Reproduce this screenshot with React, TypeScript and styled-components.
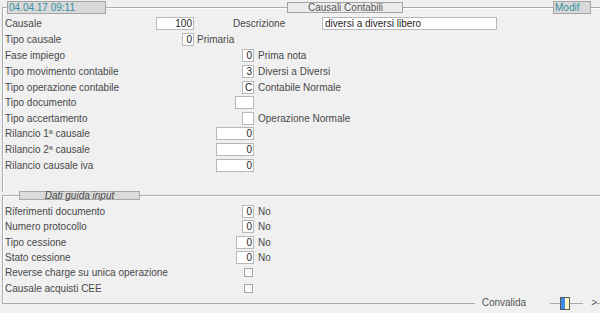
import styled, { createGlobalStyle } from 'styled-components';

const LINE = '#ababab';
const TEAL = '#34909e';
const TEXT = '#494949';

const GlobalStyle = createGlobalStyle`
    * { box-sizing: border-box; }
    body {
        margin: 0;
        background: #f0f0f0;
        font-family: "Liberation Sans", Arial, sans-serif;
        font-size: 10px;
        color: ${TEXT};
    }
`;

const Page = styled.div`
    width: 600px;
    height: 313px;
    overflow: hidden;
    padding-top: 7px;
    background: #f0f0f0;
`;

const Frame = styled.div<{ $h: number; $mt?: number; $bottom?: boolean }>`
    margin-left: 2px;
    margin-top: ${(p) => p.$mt || 0}px;
    height: ${(p) => p.$h}px;
    border-top: 1px solid ${LINE};
    border-left: 1px solid ${LINE};
    border-bottom: ${(p) => (p.$bottom ? `1px solid ${LINE}` : 'none')};
    box-shadow: inset 1px 1px 0 #fff;
    padding-left: 2px;
`;

const Header = styled.div`
    display: flex;
    align-items: center;
    height: 13px;
    margin-top: -7px;
    margin-left: -2px;
`;

const TagBox = styled.div<{ $w: number; $ml: number; $h: number; $center?: boolean; $teal?: boolean }>`
    width: ${(p) => p.$w}px;
    height: ${(p) => p.$h}px;
    margin-left: ${(p) => p.$ml}px;
    line-height: ${(p) => p.$h - 2}px;
    padding-left: 1px;
    background: ${(p) => (p.$teal ? '#d9d9d9' : '#ececec')};
    border: 1px solid #a4a4a4;
    color: ${(p) => (p.$teal ? TEAL : '#555')};
    text-align: ${(p) => (p.$center ? 'center' : 'left')};
    white-space: nowrap;
    overflow: hidden;
`;

const Rows = styled.div<{ $pt: number }>`
    padding-top: ${(p) => p.$pt}px;
`;

const Row = styled.div<{ $h: number; $mt?: number }>`
    display: flex;
    align-items: center;
    height: ${(p) => p.$h}px;
    margin-top: ${(p) => p.$mt || 0}px;
`;

const Slot = styled.div<{ $w: number }>`
    display: flex;
    align-items: center;
    justify-content: space-between;
    width: ${(p) => p.$w}px;
`;

const Label = styled.span<{ $w?: number; $ml?: number }>`
    white-space: nowrap;
    color: ${TEXT};
    margin-left: ${(p) => p.$ml || 0}px;
    width: ${(p) => (p.$w ? `${p.$w}px` : 'auto')};
    flex-shrink: 0;
`;

const Field = styled.div<{ $w: number; $left?: boolean }>`
    width: ${(p) => p.$w}px;
    height: 13px;
    line-height: 11px;
    padding: 0 1px 0 2px;
    background: #fff;
    border: 1px solid #b8b8b8;
    color: #1e1e1e;
    text-align: ${(p) => (p.$left ? 'left' : 'right')};
    white-space: nowrap;
    overflow: hidden;
`;

const Check = styled.div`
    width: 9px;
    height: 9px;
    margin-right: 1px;
    background: #f9f9f9;
    border: 1px solid #a8a8a8;
`;

const Note = styled.span<{ $ml: number }>`
    margin-left: ${(p) => p.$ml}px;
    color: ${TEXT};
    white-space: nowrap;
`;

const LegendRow = styled.div`
    display: flex;
    height: 9px;
    margin-top: -5px;
`;

const Legend = styled.div`
    margin-left: 14px;
    width: 121px;
    height: 9px;
    line-height: 8px;
    background: #dadada;
    border: 1px solid #a8a8a8;
    font-style: italic;
    text-align: center;
    color: ${TEXT};
    white-space: nowrap;
`;

const Footer = styled.div`
    display: flex;
    align-items: center;
    height: 14px;
    margin-top: -8px;
`;

const Fill = styled.div<{ $w?: number }>`
    flex: ${(p) => (p.$w ? `0 0 ${p.$w}px` : '1')};
    height: 100%;
`;

const FootText = styled.span<{ $pl: number; $pr: number }>`
    background: #f0f0f0;
    padding: 0 ${(p) => p.$pr}px 0 ${(p) => p.$pl}px;
    line-height: 14px;
    color: #555;
    white-space: nowrap;
`;

const ToggleButton = styled.div`
    width: 10px;
    height: 13px;
    border: 1px solid #5a5a5a;
    background: linear-gradient(to right, #3b8ee8 0 4px, #fff8c4 4px 100%);
`;

type Line = { label: string; value?: string; w?: number; note?: string; check?: boolean };

const upper: Line[] = [
    { label: 'Fase impiego', value: '0', w: 12, note: 'Prima nota' },
    { label: 'Tipo movimento contabile', value: '3', w: 12, note: 'Diversi a Diversi' },
    { label: 'Tipo operazione contabile', value: 'C', w: 12, note: 'Contabile Normale' },
    { label: 'Tipo documento', value: '', w: 19 },
    { label: 'Tipo accertamento', value: '', w: 12, note: 'Operazione Normale' },
    { label: 'Rilancio 1ª causale', value: '0', w: 38 },
    { label: 'Rilancio 2ª causale', value: '0', w: 38 },
    { label: 'Rilancio causale iva', value: '0', w: 38 },
];

const lower: Line[] = [
    { label: 'Riferimenti documento', value: '0', w: 12, note: 'No' },
    { label: 'Numero protocollo', value: '0', w: 12, note: 'No' },
    { label: 'Tipo cessione', value: '0', w: 18, note: 'No' },
    { label: 'Stato cessione', value: '0', w: 18, note: 'No' },
    { label: 'Reverse charge su unica operazione', check: true },
    { label: 'Causale acquisti CEE', check: true },
];

const FormLine = ({ line, h, mt }: { line: Line; h: number; mt?: number }) => (
    <Row $h={h} $mt={mt}>
        <Slot $w={249}>
            <Label>{line.label}</Label>
            {line.check ? <Check /> : <Field $w={line.w || 12}>{line.value}</Field>}
        </Slot>
        {line.note && <Note $ml={4}>{line.note}</Note>}
    </Row>
);

const App = () => {
    return (
        <>
            <GlobalStyle />
            <Page>
                <Frame $h={185}>
                    <Header>
                        <TagBox $w={99} $ml={4} $h={13} $teal>
                            04.04.17 09:11
                        </TagBox>
                        <TagBox $w={116} $ml={181} $h={11} $center>
                            Causali Contabili
                        </TagBox>
                        <TagBox $w={38} $ml={150} $h={13} $teal>
                            Modif
                        </TagBox>
                    </Header>
                    <Rows $pt={2}>
                        <Row $h={15.6}>
                            <Slot $w={189}>
                                <Label>Causale</Label>
                                <Field $w={38}>100</Field>
                            </Slot>
                            <Label $ml={39} $w={89}>
                                Descrizione
                            </Label>
                            <Field $w={175} $left>
                                diversi a diversi libero
                            </Field>
                        </Row>
                        <Row $h={15.6}>
                            <Slot $w={189}>
                                <Label>Tipo causale</Label>
                                <Field $w={12}>0</Field>
                            </Slot>
                            <Note $ml={3}>Primaria</Note>
                        </Row>
                        {upper.map((line, i) => (
                            <FormLine key={line.label} line={line} h={15.6} mt={i === 0 ? 1 : 0} />
                        ))}
                    </Rows>
                </Frame>
                <Frame $h={109} $mt={3} $bottom>
                    <LegendRow>
                        <Legend>Dati guida input</Legend>
                    </LegendRow>
                    <Rows $pt={4}>
                        {lower.map((line) => (
                            <FormLine key={line.label} line={line} h={15.3} />
                        ))}
                    </Rows>
                </Frame>
                <Footer>
                    <Fill />
                    <FootText $pl={7} $pr={24}>
                        Convalida
                    </FootText>
                    <Fill $w={10} />
                    <ToggleButton />
                    <Fill $w={13} />
                    <FootText $pl={8} $pr={0}>
                        &gt;
                    </FootText>
                    <Fill $w={3} />
                </Footer>
            </Page>
        </>
    );
};

export default App;
